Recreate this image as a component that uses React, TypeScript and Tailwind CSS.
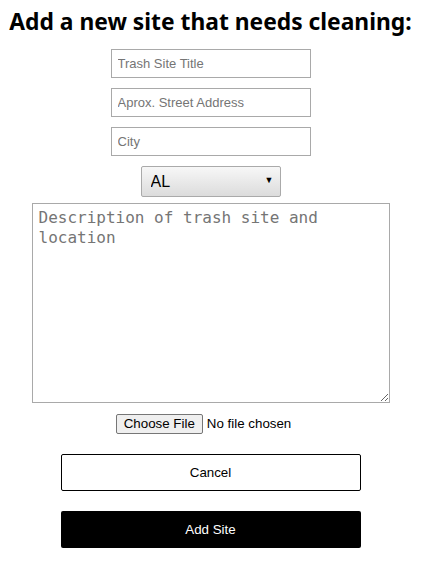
import { useState } from "react";

const STATES = ["AL", "AK", "AZ", "AR", "CA", "CO", "CT", "DE", "FL", "GA"];

export default function App() {
  const [state, setState] = useState("AL");

  return (
    <div className="w-[421px] bg-white font-['Liberation_Sans',Arial,sans-serif] text-black">
      <form className="flex flex-col items-center pt-[8px]" onSubmit={(e) => e.preventDefault()}>
        <h2 className="h-[28px] text-[22.8px] leading-[28px] font-bold font-['Noto_Sans',sans-serif] whitespace-nowrap">
          Add a new site that needs cleaning:
        </h2>

        <input
          type="text"
          placeholder="Trash Site Title"
          className="mt-[13px] w-[200px] h-[29px] border border-[#a9a9a9] px-[6px] text-[13px] placeholder:text-[#757575] outline-none"
        />
        <input
          type="text"
          placeholder="Aprox. Street Address"
          className="mt-[10px] w-[200px] h-[29px] border border-[#a9a9a9] px-[6px] text-[13px] placeholder:text-[#757575] outline-none"
        />
        <input
          type="text"
          placeholder="City"
          className="mt-[10px] w-[200px] h-[29px] border border-[#a9a9a9] px-[6px] text-[13px] placeholder:text-[#757575] outline-none"
        />

        <div className="relative mt-[10px] w-[140px] h-[31px]">
          <select
            value={state}
            onChange={(e) => setState(e.target.value)}
            className="appearance-none w-full h-full border border-[#aaaaaa] rounded-[2px] bg-gradient-to-b from-[#f7f7f7] to-[#dcdcdc] pl-[9px] text-[16px] outline-none"
          >
            {STATES.map((s) => (
              <option key={s} value={s}>
                {s}
              </option>
            ))}
          </select>
          <span className="pointer-events-none absolute right-[7px] top-[10px] text-[9px] leading-none">▼</span>
        </div>

        <textarea
          placeholder="Description of trash site and location"
          className="mt-[6px] w-[358px] h-[200px] border border-[#a9a9a9] px-[6px] pt-[4px] pb-[3px] text-[16px] leading-[20px] font-['DejaVu_Sans_Mono',monospace] placeholder:text-[#757575] outline-none resize-y"
        />

        <div className="mt-[11px] flex items-center gap-[4px] pr-[14px] text-[13.33px]">
          <button
            type="button"
            className="h-[20px] px-[7px] border border-[#767676] rounded-[2px] bg-[#efefef] leading-none"
          >
            Choose File
          </button>
          <span>No file chosen</span>
        </div>

        <button
          type="button"
          className="mt-[20px] w-[300px] h-[37px] border border-black rounded-[2px] bg-white text-[13.33px]"
        >
          Cancel
        </button>
        <button
          type="submit"
          className="mt-[20px] w-[300px] h-[37px] rounded-[2px] bg-black text-white text-[13.33px]"
        >
          Add Site
        </button>
      </form>
    </div>
  );
}
